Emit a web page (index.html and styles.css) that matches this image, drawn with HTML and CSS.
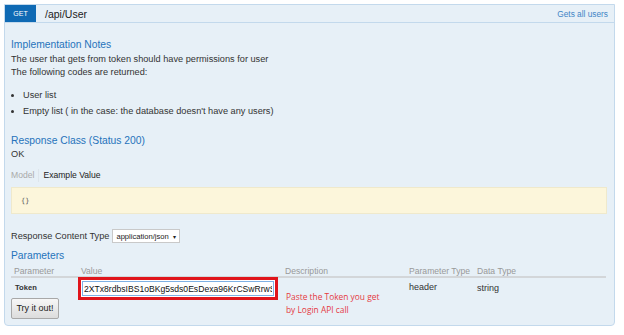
FILE: index.html
```html
<!DOCTYPE html>
<html lang="en">
<head>
    <meta charset="UTF-8">
    <title>/api/User</title>
    <link rel="stylesheet" href="styles.css">
</head>
<body>
    <div class="operation">
        <div class="heading">
            <span class="method">GET</span>
            <span class="path">/api/User</span>
            <span class="summary">Gets all users</span>
        </div>
        <div class="content">
            <h4>Implementation Notes</h4>
            <p>The user that gets from token should have permissions for user<br>The following codes are returned:</p>
            <ul>
                <li>User list</li>
                <li>Empty list ( in the case: the database doesn't have any users)</li>
            </ul>

            <h4 class="response-class">Response Class (Status 200)</h4>
            <div class="ok">OK</div>

            <div class="tabs">
                <span class="tab">Model</span>
                <span class="tab active">Example Value</span>
            </div>
            <div class="example">{}</div>

            <div class="content-type">
                Response Content Type
                <span class="select">application/json <span class="caret">&#9662;</span></span>
            </div>

            <h4 class="params-title">Parameters</h4>
            <div class="params">
                <div class="th">Parameter</div>
                <div class="th">Value</div>
                <div class="th">Description</div>
                <div class="th">Parameter Type</div>
                <div class="th">Data Type</div>

                <div class="td name">Token</div>
                <div class="td value">
                    <div class="highlight">
                        <input class="token" type="text" value="2XTx8rdbsIBS1oBKg5sds0EsDexa96KrCSwRrwS">
                    </div>
                </div>
                <div class="td desc">Paste the Token you get<br>by Login API call</div>
                <div class="td ptype">header</div>
                <div class="td dtype">string</div>

                <div class="submit">
                    <button class="try">Try it out!</button>
                </div>
            </div>
        </div>
    </div>
</body>
</html>
```

FILE: styles.css
```css
body {
    margin: 0;
    background: #fff;
    font-family: "Liberation Sans", Arial, sans-serif;
    color: #333;
}
.operation {
    width: 611px;
    margin: 4px 0 0 4px;
    height: 322px;
    box-sizing: border-box;
    background-color: #e7f0f7;
    border: 1px solid #c3d9ec;
    border-radius: 0 0 4px 4px;
}
.heading {
    display: flex;
    align-items: center;
    height: 17px;
    border-bottom: 1px solid #c3d9ec;
}
.method {
    width: 31px;
    height: 17px;
    background-color: #0f6ab4;
    color: #fff;
    font-size: 7px;
    display: flex;
    align-items: center;
    justify-content: center;
}
.path {
    margin-left: 9px;
    font-size: 10.5px;
    color: #222;
}
.summary {
    margin-left: auto;
    margin-right: 6px;
    font-size: 8.3px;
    color: #3f85c6;
}
.content {
    padding: 0 7px 0 6px;
}
h4 {
    margin: 0;
    font-weight: normal;
    font-size: 10.3px;
    color: #2673bb;
    line-height: 13px;
}
.content > h4:first-child {
    margin-top: 15px;
}
p {
    margin: 2px 0 0;
    font-size: 9.2px;
    line-height: 13px;
}
ul {
    margin: 10px 0 0;
    padding-left: 12px;
    font-size: 9.2px;
    line-height: 13px;
}
li {
    margin-bottom: 3px;
}
.response-class {
    margin-top: 16px;
}
.ok {
    font-size: 9.2px;
    line-height: 13px;
    margin-top: 1px;
}
.tabs {
    display: flex;
    margin-top: 8px;
    font-size: 8.6px;
    line-height: 13px;
}
.tab {
    padding-right: 4px;
    color: #aaa;
}
.tab.active {
    color: #222;
    border-left: 1px solid #dde5ec;
    padding-left: 4px;
}
.example {
    margin-top: 5px;
    height: 27px;
    box-sizing: border-box;
    background-color: #fcf6db;
    border: 1px solid #efe9cc;
    font-family: "DejaVu Sans Mono", monospace;
    font-size: 7px;
    color: #555;
    padding: 0 9px;
    display: flex;
    align-items: center;
}
.content-type {
    margin-top: 15px;
    font-size: 9.2px;
    display: flex;
    align-items: center;
    height: 14px;
}
.select {
    margin-left: 3px;
    height: 14px;
    box-sizing: border-box;
    padding: 0 3px;
    background: #fff;
    border: 1px solid #c9c9c9;
    font-size: 7.6px;
    display: flex;
    align-items: center;
    color: #222;
}
.caret {
    font-size: 6px;
    margin-left: 4px;
}
.params-title {
    margin-top: 6px;
}
.params {
    display: grid;
    grid-template-columns: 67px 204px 124px 68px 1fr;
    grid-template-rows: 14px 19px auto;
    margin-top: 2px;
    margin-right: 1px;
}
.th {
    font-size: 8.6px;
    color: #999;
    padding-left: 3px;
    line-height: 14px;
    border-bottom: 2px solid #d3d6d9;
}
.td {
    font-size: 8.6px;
    padding-left: 3px;
}
.name {
    font-weight: bold;
    font-size: 7.6px;
    padding-left: 4px;
    line-height: 19px;
}
.value {
    padding-left: 0;
}
.highlight {
    width: 200px;
    height: 23px;
    margin-top: -1px;
    box-sizing: border-box;
    border: 3px solid #e0141b;
    padding: 1px;
    background: #fff;
}
.token {
    display: block;
    width: 100%;
    height: 100%;
    box-sizing: border-box;
    margin: 0;
    border: 1px solid #7fb1e4;
    padding: 0 1px;
    font-family: "Liberation Sans", Arial, sans-serif;
    font-size: 8.6px;
    color: #111;
    outline: none;
}
.desc {
    grid-row: span 2;
    padding-top: 12px;
    padding-left: 4px;
    font-family: "Open Sans", sans-serif;
    font-size: 8.4px;
    line-height: 13px;
    color: #e53a3f;
}
.ptype,
.dtype {
    padding-top: 4px;
    font-size: 9px;
}
.dtype {
    padding-top: 5px;
}
.submit {
    grid-column: 1;
}
.try {
    width: 48px;
    height: 21px;
    margin-top: 0;
    padding: 0;
    font-family: "Liberation Sans", Arial, sans-serif;
    font-size: 9px;
    color: #222;
    background: linear-gradient(#f7f7f7, #dcdcdc);
    border: 1px solid #a8a8a8;
    border-radius: 2px;
}
```
